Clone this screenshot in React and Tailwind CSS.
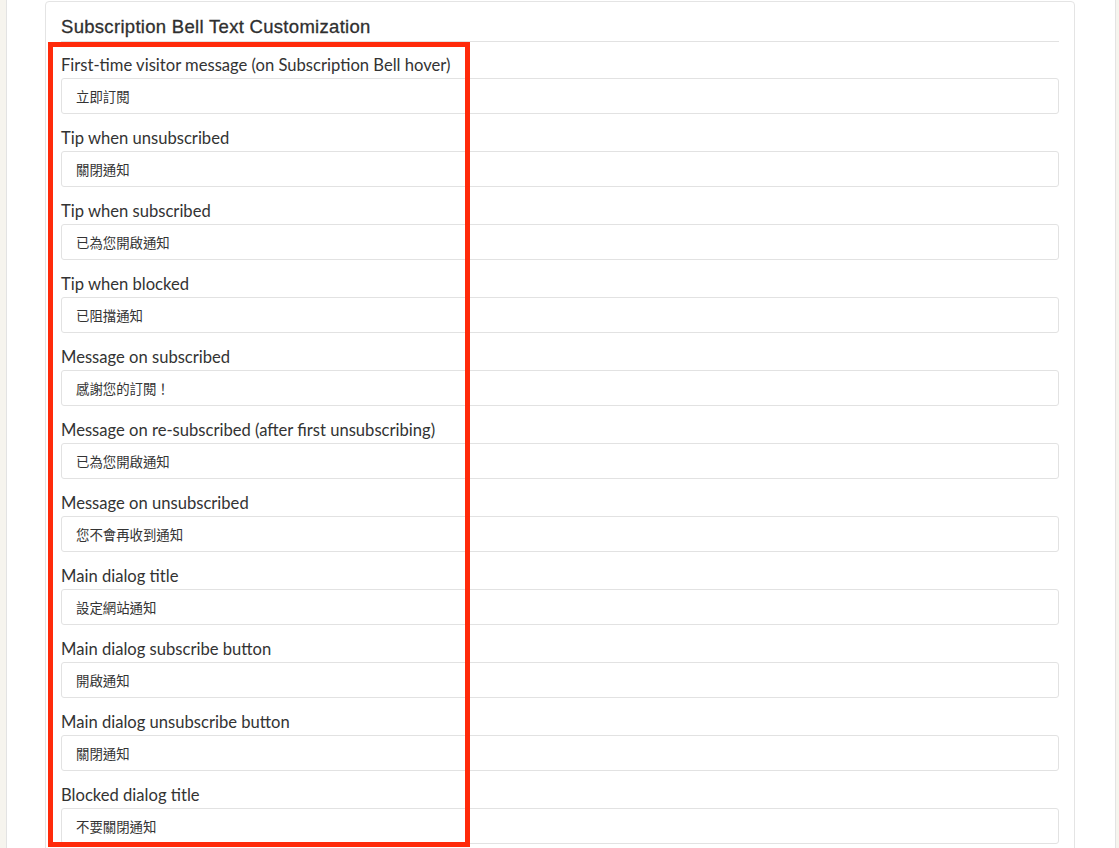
import React from "react";

const fields = [
  ["First-time visitor message (on Subscription Bell hover)", "立即訂閱"],
  ["Tip when unsubscribed", "關閉通知"],
  ["Tip when subscribed", "已為您開啟通知"],
  ["Tip when blocked", "已阻擋通知"],
  ["Message on subscribed", "感謝您的訂閱！"],
  ["Message on re-subscribed (after first unsubscribing)", "已為您開啟通知"],
  ["Message on unsubscribed", "您不會再收到通知"],
  ["Main dialog title", "設定網站通知"],
  ["Main dialog subscribe button", "開啟通知"],
  ["Main dialog unsubscribe button", "關閉通知"],
  ["Blocked dialog title", "不要關閉通知"],
];

const App = () => {
  return (
    <div className="h-[848px] overflow-hidden bg-[#f6f4ee] pl-[6px] pr-[3px]">
      <div className="h-full bg-white border-x border-[#e3e3e3] pl-[38px] pr-[40px] pt-px">
        <section className="relative h-[900px] rounded-[4px] border border-[#e4e4e4] bg-white px-[15px] pt-[13px]">
          <h2
            className="text-[18.5px] leading-6 font-normal tracking-[0.3px] text-[#2f2f2f] pb-[2px] border-b border-[#e2e2e2] [-webkit-text-stroke:0.3px_#2f2f2f]"
            style={{ fontFamily: "'Liberation Sans', Arial, sans-serif" }}
          >
            Subscription Bell Text Customization
          </h2>

          <div className="pt-[13px]" style={{ fontFamily: "Lato, 'Noto Sans CJK TC', sans-serif" }}>
            {fields.map(([label, value]) => (
              <div key={label} className="mb-[14px]">
                <label className="block text-[16.6px] leading-5 text-[#333] mb-[3px]">{label}</label>
                <input
                  type="text"
                  defaultValue={value}
                  className="block w-full h-9 rounded-[3px] border border-[#e2e2e2] bg-white px-[14px] text-[13.4px] text-[#333] outline-none"
                  style={{ fontFamily: "'Noto Sans CJK TC', sans-serif" }}
                />
              </div>
            ))}
          </div>

          {/* annotation box */}
          <div className="absolute left-[2px] top-[40px] w-[422px] h-[805px] border-[5px] border-[#ff2a0a] pointer-events-none" />
        </section>
      </div>
    </div>
  );
};

export default App;
